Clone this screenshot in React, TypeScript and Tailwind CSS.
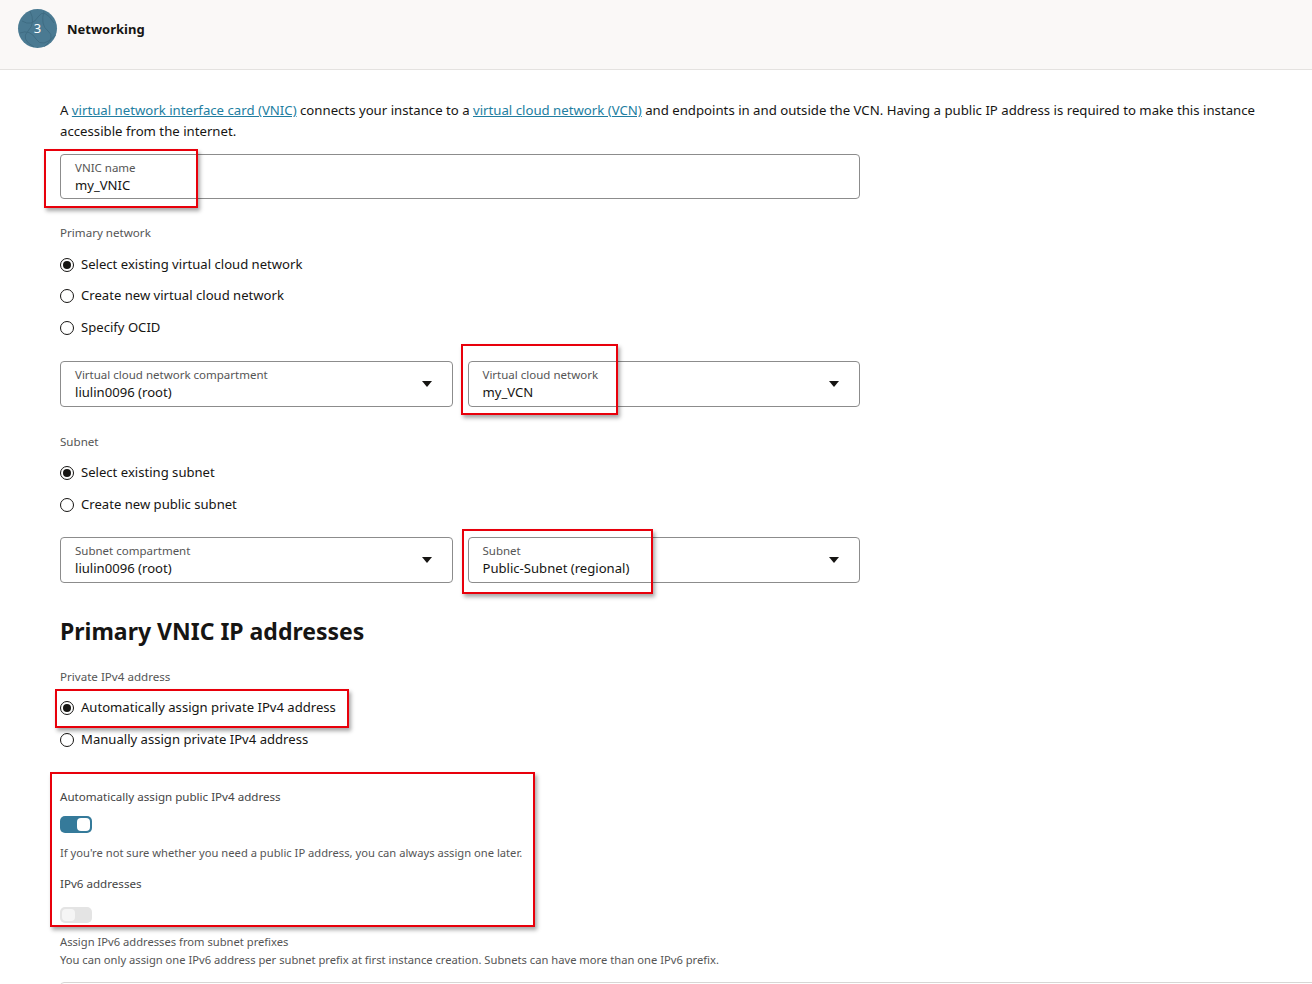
import React from "react";

const font = { fontFamily: "'Noto Sans', 'Open Sans', sans-serif" };

function Radio({ checked, label }: { checked?: boolean; label: string }) {
  return (
    <div className="flex items-center h-[31.5px]">
      <span className="w-[14px] h-[14px] rounded-full border border-[#161513] flex items-center justify-center bg-white">
        {checked && <span className="w-[8px] h-[8px] rounded-full bg-[#161513]" />}
      </span>
      <span className="ml-[7px] text-[13.1px] text-[#161513]">{label}</span>
    </div>
  );
}

function Select({ label, value }: { label: string; value: string }) {
  return (
    <div className="flex-1 h-[46px] border border-[#8c8c8c] rounded-[4px] flex items-center pl-[14px] pr-[20px]">
      <div className="flex-1 flex flex-col">
        <span className="text-[11.5px] leading-[16px] text-[#555]">{label}</span>
        <span className="text-[13.1px] leading-[18px] text-[#161513]">{value}</span>
      </div>
      <svg width="10" height="6" viewBox="0 0 10 6"><path d="M0 0h10L5 6z" fill="#161513" /></svg>
    </div>
  );
}

function RedBox({ l, t, w, h }: { l: number; t: number; w: number; h: number }) {
  return (
    <div
      className="absolute border-2 border-[#e8000b] shadow-[2px_3px_4px_rgba(0,0,0,0.35)] pointer-events-none"
      style={{ left: l, top: t, width: w, height: h }}
    />
  );
}

export default function App() {
  return (
    <div className="relative w-[1312px] h-[984px] overflow-hidden bg-white" style={font}>
      <div className="h-[70px] bg-[#faf8f7] border-b border-[#e4e2e0] flex items-start pt-[9px] pl-[18px]">
        <div className="w-[39px] h-[39px] rounded-full bg-[#4a7b93] flex items-center justify-center relative overflow-hidden">
          <svg className="absolute inset-0" width="39" height="39" viewBox="0 0 39 39">
            <g stroke="#3d6a80" strokeWidth="1" fill="none" opacity="0.8">
              <path d="M4 12 Q14 18 20 8 T36 14" />
              <path d="M2 24 Q12 20 18 30 T38 26" />
              <path d="M12 2 Q18 14 10 22 T16 38" />
              <path d="M26 2 Q22 16 30 22 T26 38" />
            </g>
          </svg>
          <span className="relative text-white text-[13px]">3</span>
        </div>
        <span className="ml-[10px] mt-[10px] text-[13px] leading-[20px] font-bold text-[#161513]">Networking</span>
      </div>

      <div className="pl-[60px] pr-[40px] pt-[30px]">
        <p className="text-[13.2px] leading-[21px] text-[#161513]">
          A <span className="text-[#227ea1] underline">virtual network interface card (VNIC)</span> connects your instance to a{" "}
          <span className="text-[#227ea1] underline">virtual cloud network (VCN)</span> and endpoints in and outside the VCN. Having a public IP address is required to make this instance accessible from the internet.
        </p>

        <div className="mt-[12px] w-[800px] h-[45px] border border-[#8c8c8c] rounded-[4px] pl-[14px] flex flex-col justify-center">
          <span className="text-[11.5px] leading-[16px] text-[#555]">VNIC name</span>
          <span className="text-[13.1px] leading-[18px] text-[#161513]">my_VNIC</span>
        </div>

        <div className="mt-[26px] text-[11.6px] text-[#555] leading-[16px]">Primary network</div>
        <div className="mt-[8px] flex flex-col">
          <Radio checked label="Select existing virtual cloud network" />
          <Radio label="Create new virtual cloud network" />
          <Radio label="Specify OCID" />
        </div>

        <div className="mt-[17px] w-[800px] flex gap-[15px]">
          <Select label="Virtual cloud network compartment" value="liulin0096 (root)" />
          <Select label="Virtual cloud network" value="my_VCN" />
        </div>

        <div className="mt-[27px] text-[11.6px] text-[#555] leading-[16px]">Subnet</div>
        <div className="mt-[8px] flex flex-col">
          <Radio checked label="Select existing subnet" />
          <Radio label="Create new public subnet" />
        </div>

        <div className="mt-[16px] w-[800px] flex gap-[15px]">
          <Select label="Subnet compartment" value="liulin0096 (root)" />
          <Select label="Subnet" value="Public-Subnet (regional)" />
        </div>

        <h2 className="mt-[31px] text-[23px] leading-[34px] font-bold text-[#161513]">Primary VNIC IP addresses</h2>

        <div className="mt-[21px] text-[11.6px] text-[#555] leading-[16px]">Private IPv4 address</div>
        <div className="mt-[8px] flex flex-col">
          <Radio checked label="Automatically assign private IPv4 address" />
          <Radio label="Manually assign private IPv4 address" />
        </div>

        <div className="mt-[33px] text-[11.6px] text-[#444] leading-[16px]">Automatically assign public IPv4 address</div>
        <div className="mt-[11px] w-[32px] h-[17px] rounded-[5px] bg-[#357a9a] flex items-center justify-end pr-[2px]">
          <span className="w-[13px] h-[13px] rounded-[4px] bg-white" />
        </div>
        <div className="mt-[12px] text-[11.2px] text-[#555] leading-[16px]">If you're not sure whether you need a public IP address, you can always assign one later.</div>
        <div className="mt-[15px] text-[11.6px] text-[#444] leading-[16px]">IPv6 addresses</div>
        <div className="mt-[15px] w-[32px] h-[16px] rounded-[5px] bg-[#e4e4e4] flex items-center pl-[2px]">
          <span className="w-[13px] h-[12px] rounded-[4px] bg-[#f5f5f5]" />
        </div>
        <div className="mt-[10px] text-[11.2px] text-[#555] leading-[18px]">Assign IPv6 addresses from subnet prefixes</div>
        <div className="text-[11.2px] text-[#555] leading-[18px]">You can only assign one IPv6 address per subnet prefix at first instance creation. Subnets can have more than one IPv6 prefix.</div>
        <div className="mt-[13px] mr-[-60px] h-[20px] border border-[#d8d6d4] rounded-[4px]" />
      </div>

      <RedBox l={44} t={149} w={154} h={59} />
      <RedBox l={461} t={344} w={157} h={71} />
      <RedBox l={462} t={529} w={191} h={65} />
      <RedBox l={55} t={689} w={294} h={39} />
      <RedBox l={50} t={772} w={485} h={155} />
    </div>
  );
}
